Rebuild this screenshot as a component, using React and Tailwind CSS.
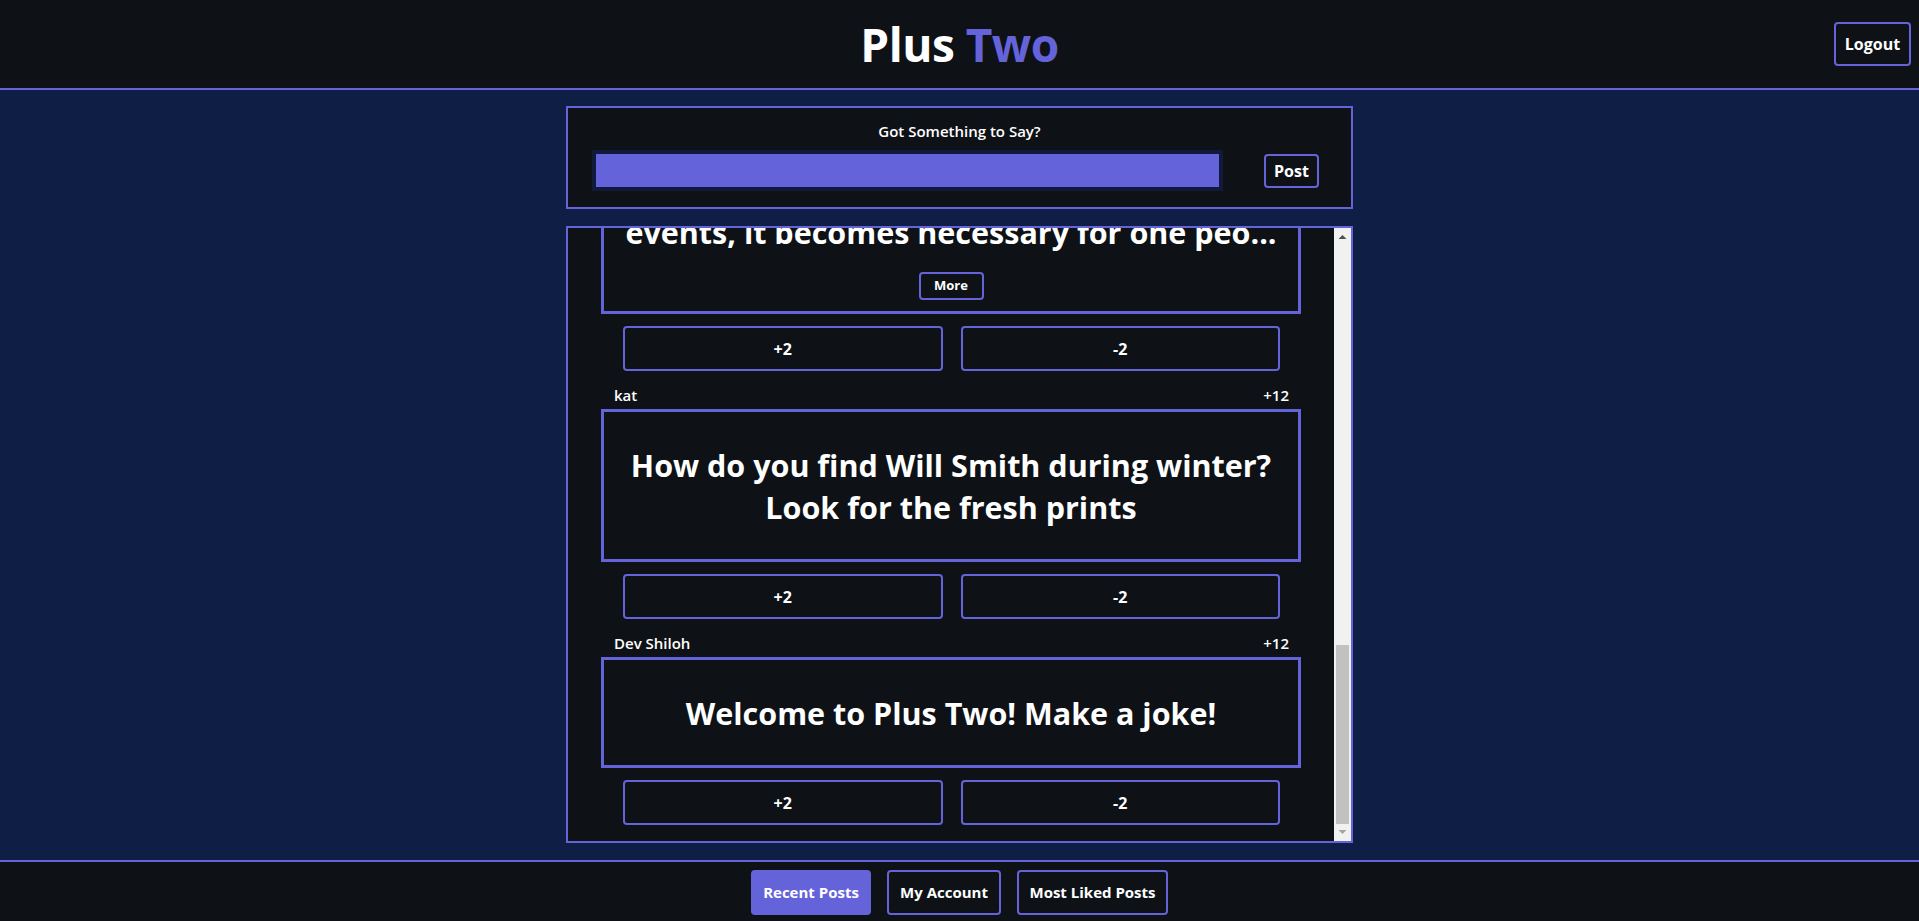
import React, { useLayoutEffect, useRef } from "react";

const posts = [
  { user: "marco", score: "+6", lines: ["What do you call a fake noodle?", "An impasta"] },
  { user: "kat", score: "+4", lines: ["I used to hate facial hair..."], more: true },
  { user: "jules", score: "+10", lines: ["Why did the scarecrow win an award?"] },
  { user: "Dev Shiloh", score: "+8", lines: ["I'm reading a book about anti-gravity."] },
  { user: "sam", score: "+2", lines: ["Parallel lines have so much in common."] },
  {
    user: "thomas j",
    score: "+14",
    lines: ["When in the Course of human", "events, it becomes necessary for one peo..."],
    more: true,
  },
  { user: "kat", score: "+12", lines: ["How do you find Will Smith during winter?", "Look for the fresh prints"] },
  { user: "Dev Shiloh", score: "+12", lines: ["Welcome to Plus Two! Make a joke!"] },
];

function Post({ user, score, lines, more }) {
  return (
    <div className="w-[700px] mx-auto flex flex-col">
      <div className="flex justify-between pl-[13px] pr-[12px] h-[21px] leading-[21px] text-[15px] font-semibold text-white mb-[3px]">
        <span>{user}</span>
        <span>{score}</span>
      </div>
      <div
        className={
          "border-[3px] border-[#6563d9] flex flex-col items-center pt-[32px] " +
          (more ? "pb-[11px]" : "pb-[31px]")
        }
      >
        <div className="text-[30.5px] leading-[42px] font-bold text-white text-center">
          {lines.map((l, i) => (
            <div key={i} className="whitespace-nowrap">
              {l}
            </div>
          ))}
        </div>
        {more && (
          <button className="mt-[19px] h-[28px] w-[65px] border-2 border-[#6563d9] rounded-[4px] text-[13px] font-bold text-white flex items-center justify-center">
            More
          </button>
        )}
      </div>
      <div className="mt-[12px] flex gap-[18px] pl-[22px] pr-[21px]">
        <button className="flex-1 h-[45px] border-2 border-[#6563d9] rounded-[4px] text-[16px] font-bold text-white">
          +2
        </button>
        <button className="flex-1 h-[45px] border-2 border-[#6563d9] rounded-[4px] text-[16px] font-bold text-white">
          -2
        </button>
      </div>
    </div>
  );
}

function ScrollBar() {
  return (
    <div className="w-[17px] shrink-0 bg-[#f1f1f1] flex flex-col">
      <div className="h-[17px] shrink-0">
        <svg width="17" height="17" viewBox="0 0 17 17">
          <polygon points="4.5,11 8.5,7 12.5,11" fill="#505050" />
        </svg>
      </div>
      <div className="flex-1 flex flex-col justify-end px-[2px]">
        <div className="h-[179px] bg-[#c1c1c1]" />
      </div>
      <div className="h-[17px] shrink-0">
        <svg width="17" height="17" viewBox="0 0 17 17">
          <polygon points="4.5,6 12.5,6 8.5,10" fill="#a3a3a3" />
        </svg>
      </div>
    </div>
  );
}

export default function App() {
  const feedRef = useRef(null);
  useLayoutEffect(() => {
    const el = feedRef.current;
    if (el) el.scrollTop = el.scrollHeight;
  }, []);

  return (
    <div className="h-[921px] flex flex-col bg-[#0f1e44] font-['Open_Sans',sans-serif] text-white overflow-hidden">
      <header className="h-[90px] shrink-0 bg-[#0e1217] border-b-2 border-[#6563d9] grid grid-cols-[1fr_auto_1fr] items-center">
        <div />
        <h1 className="text-[46px] font-bold leading-none tracking-[-0.5px]">
          <span className="text-white">Plus </span>
          <span className="text-[#6563d9]">Two</span>
        </h1>
        <div className="flex justify-end pr-[8px]">
          <button className="w-[77px] h-[44px] border-2 border-[#6563d9] rounded-[4px] text-[16px] font-bold text-white">
            Logout
          </button>
        </div>
      </header>

      <main className="flex-1 flex flex-col items-center pt-[16px]">
        <div className="w-[787px] h-[103px] shrink-0 border-2 border-[#6563d9] bg-[#0e1217] flex flex-col">
          <div className="pt-[13px] text-center text-[15px] leading-[20px] font-semibold text-white">
            Got Something to Say?
          </div>
          <div className="flex items-center mt-[9px] pl-[24px]">
            <input
              type="text"
              className="w-[631px] h-[41px] bg-[#6563d9] border-4 border-[#111a3b] outline-none"
            />
            <button className="ml-[41px] w-[55px] h-[34px] border-2 border-[#6563d9] rounded-[4px] text-[16px] font-bold text-white">
              Post
            </button>
          </div>
        </div>

        <div className="mt-[17px] w-[787px] h-[617px] shrink-0 border-2 border-[#6563d9] bg-[#0e1217] flex">
          <div
            ref={feedRef}
            className="flex-1 min-w-0 overflow-y-scroll [scrollbar-width:none]"
          >
            <div className="flex flex-col gap-[14px] pt-[14px] pb-[16px]">
              {posts.map((p, i) => (
                <Post key={i} {...p} />
              ))}
            </div>
          </div>
          <ScrollBar />
        </div>
      </main>

      <footer className="h-[61px] shrink-0 bg-[#0e1217] border-t-2 border-[#6563d9] flex justify-center gap-[16px] pt-[8px]">
        <button className="h-[45px] w-[120px] whitespace-nowrap bg-[#6563d9] border-2 border-[#6563d9] rounded-[4px] text-[15px] font-bold text-white">
          Recent Posts
        </button>
        <button className="h-[45px] w-[114px] whitespace-nowrap border-2 border-[#6563d9] rounded-[4px] text-[15px] font-bold text-white">
          My Account
        </button>
        <button className="h-[45px] w-[151px] whitespace-nowrap border-2 border-[#6563d9] rounded-[4px] text-[15px] font-bold text-white">
          Most Liked Posts
        </button>
      </footer>
    </div>
  );
}
